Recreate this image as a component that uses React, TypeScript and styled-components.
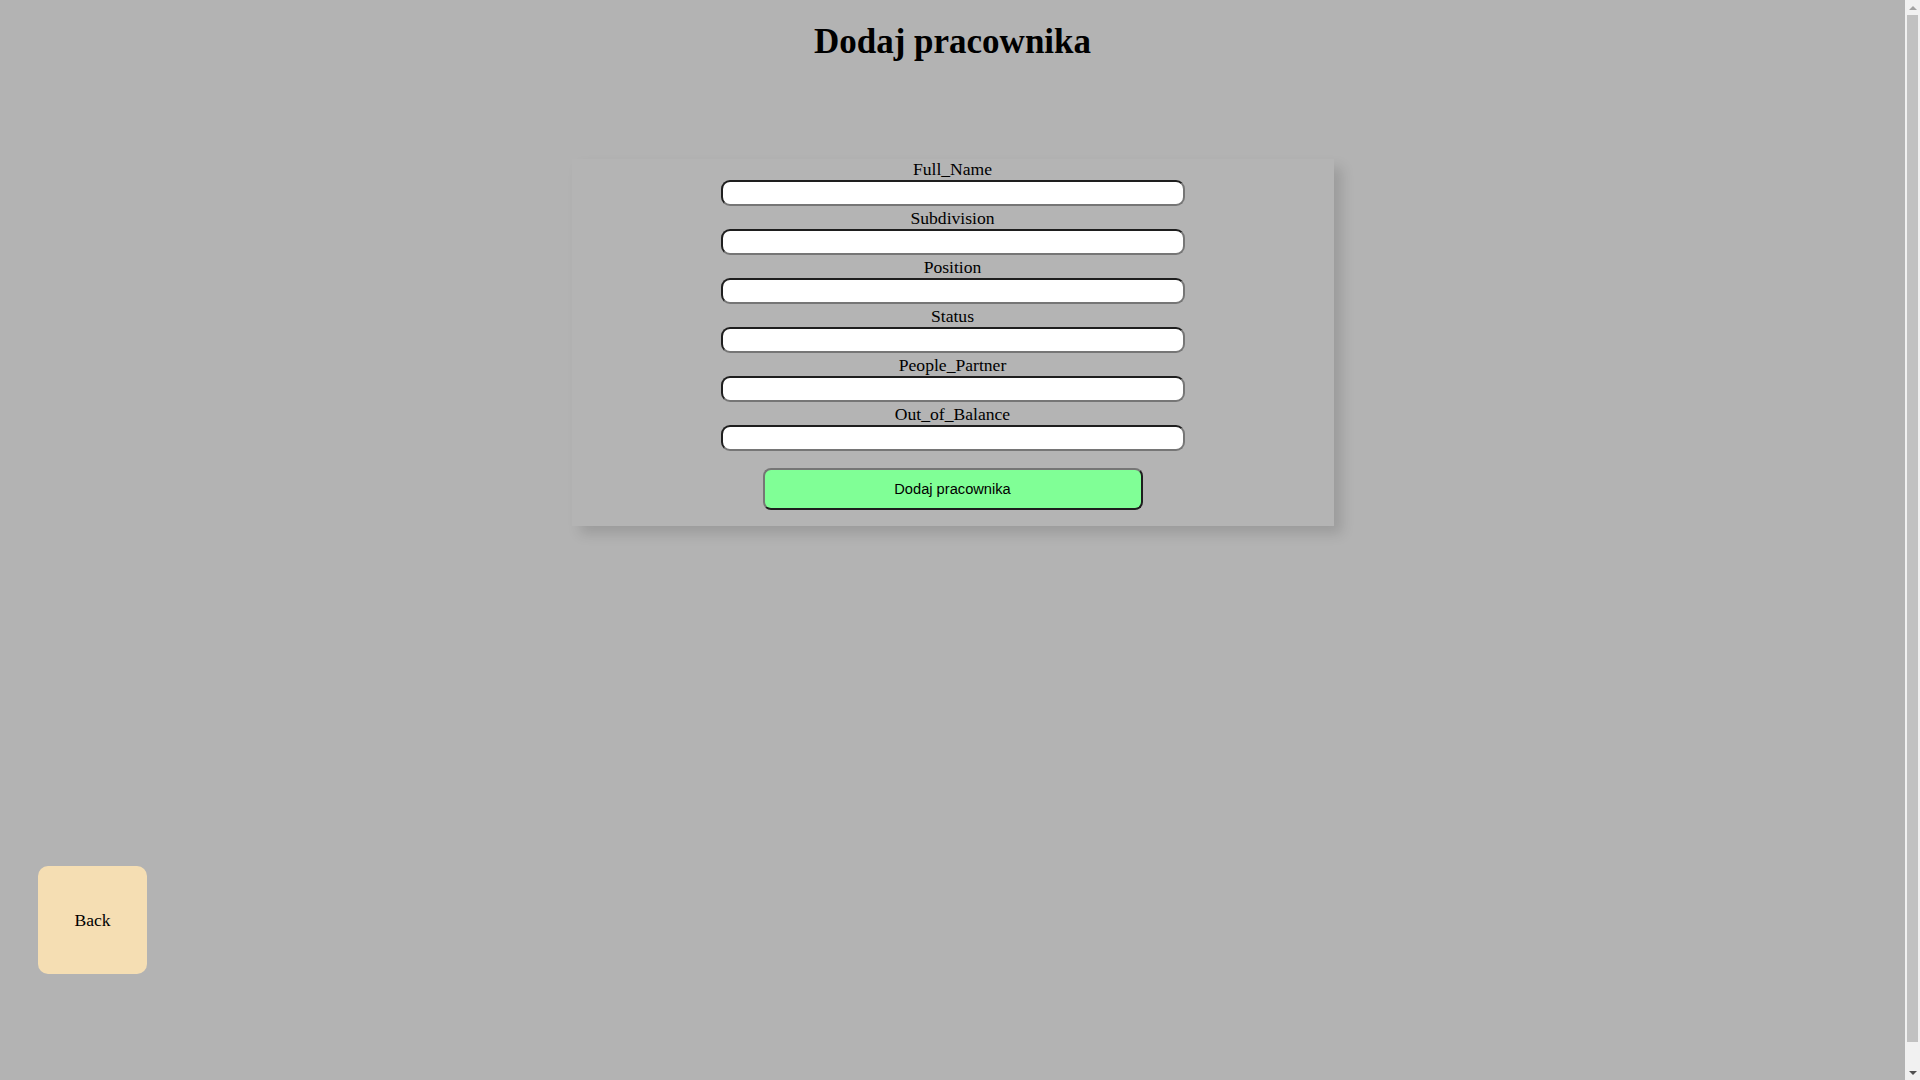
import React from "react";
import styled, { createGlobalStyle } from "styled-components";

const GlobalStyle = createGlobalStyle`
  html, body {
    margin: 0;
    padding: 0;
    background: #b3b3b3;
  }
  body {
    font-family: "Liberation Serif", "Times New Roman", serif;
    color: #000;
  }
`;

const Page = styled.div`
  display: flex;
  flex-direction: column;
  align-items: center;
  padding-right: 15px;
  padding-bottom: 131px;
`;

const Title = styled.h1`
  margin: 22px 0 0;
  font-size: 35px;
  line-height: 40px;
  font-weight: bold;
  text-align: center;
`;

const Panel = styled.form`
  margin-top: 97px;
  width: 40%;
  box-sizing: border-box;
  background: #b4b4b4;
  box-shadow: 8px 8px 12px rgba(0, 0, 0, 0.13);
  display: flex;
  flex-direction: column;
  align-items: center;
  padding: 0 0 16px;
`;

const Field = styled.div`
  display: flex;
  flex-direction: column;
  align-items: center;
  margin-bottom: 1px;
`;

const Label = styled.label`
  display: block;
  font-size: 17.6px;
  line-height: 21px;
  text-align: center;
`;

const Input = styled.input`
  width: 464px;
  height: 26px;
  box-sizing: border-box;
  border-width: 2px;
  border-style: solid;
  border-color: #1e1e1e #767676 #767676 #1e1e1e;
  border-radius: 9px;
  background: #fff;
  padding: 1px 6px;
  margin-bottom: 1px;
  font-size: 13.33px;
  font-family: "Liberation Sans", Arial, sans-serif;
  outline: none;
`;

const Submit = styled.button`
  margin-top: 15px;
  width: 380px;
  height: 42px;
  box-sizing: border-box;
  background: #80ff96;
  border-width: 2px;
  border-style: solid;
  border-color: #767676 #1e1e1e #1e1e1e #767676;
  border-radius: 8px;
  font-family: "Liberation Sans", Arial, sans-serif;
  font-size: 14.67px;
  color: #000;
  cursor: pointer;
`;

const BackRow = styled.div`
  align-self: stretch;
  display: flex;
  justify-content: flex-start;
  padding-left: 38px;
  margin-top: 340px;
`;

const BackButton = styled.button`
  width: 109px;
  height: 108px;
  background: #f5deb3;
  border: none;
  border-radius: 10px;
  font-family: "Liberation Serif", "Times New Roman", serif;
  font-size: 17.6px;
  color: #000;
  cursor: pointer;
`;

const ScrollTrack = styled.div`
  position: fixed;
  top: 0;
  right: 0;
  width: 15px;
  height: 100vh;
  background: #f1f1f1;
  display: flex;
  flex-direction: column;
  align-items: center;
`;

const ScrollArrow = styled.div<{ $down?: boolean }>`
  height: 15px;
  width: 15px;
  display: flex;
  align-items: center;
  justify-content: center;
  flex: none;
`;

const ScrollThumb = styled.div`
  flex: 1;
  width: 11px;
  margin-bottom: 23px;
  background: #c1c1c1;
`;

function Arrow({ down }: { down?: boolean }) {
  return (
    <ScrollArrow $down={down}>
      <svg width="8" height="4" viewBox="0 0 8 4">
        {down ? (
          <polygon points="0,0 8,0 4,4" fill="#505050" />
        ) : (
          <polygon points="0,4 8,4 4,0" fill="#a3a3a3" />
        )}
      </svg>
    </ScrollArrow>
  );
}

const fields = [
  "Full_Name",
  "Subdivision",
  "Position",
  "Status",
  "People_Partner",
  "Out_of_Balance",
];

export default function App() {
  return (
    <>
      <GlobalStyle />
      <Page>
        <Title>Dodaj pracownika</Title>
        <Panel onSubmit={(e) => e.preventDefault()}>
          {fields.map((f) => (
            <Field key={f}>
              <Label htmlFor={f}>{f}</Label>
              <Input id={f} name={f} type="text" />
            </Field>
          ))}
          <Submit type="submit">Dodaj pracownika</Submit>
        </Panel>
        <BackRow>
          <BackButton type="button">Back</BackButton>
        </BackRow>
      </Page>
      <ScrollTrack aria-hidden="true">
        <Arrow />
        <ScrollThumb />
        <Arrow down />
      </ScrollTrack>
    </>
  );
}
